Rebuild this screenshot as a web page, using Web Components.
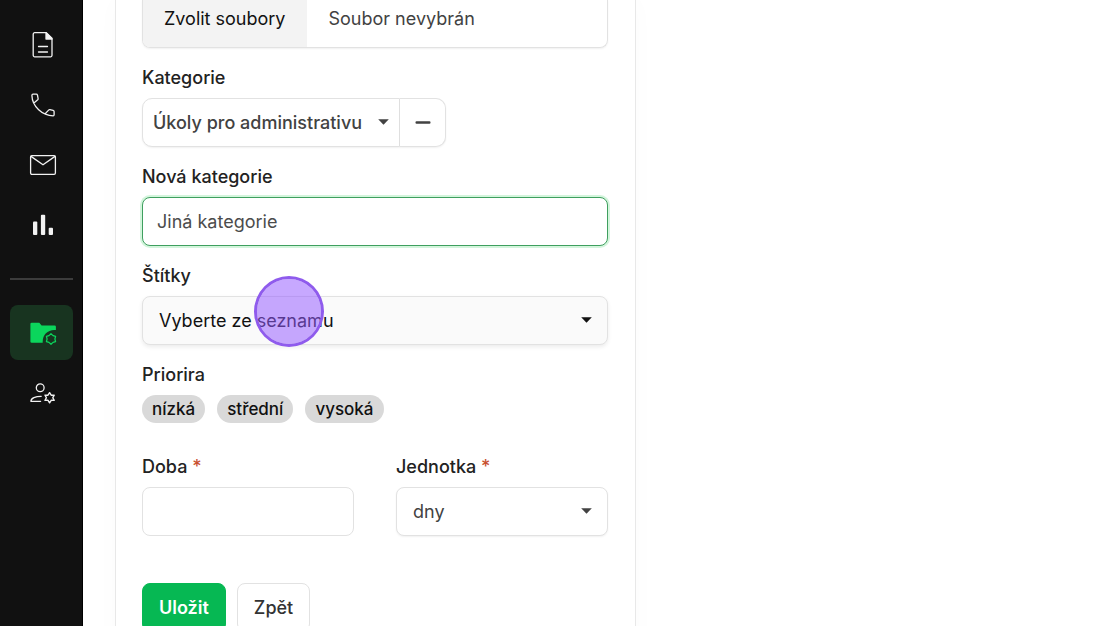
<!DOCTYPE html>
<html lang="cs">
<head>
<meta charset="utf-8">
<meta name="viewport" content="width=device-width, initial-scale=1">
<title>Nový úkol</title>
<style>
  html, body { margin: 0; height: 100%; }
  body {
    font: 400 18px/24px Inter, "Liberation Sans", sans-serif;
    color: #222;
    background: #fff;
  }
</style>
</head>
<body>
<app-shell>
  <side-nav slot="nav">
    <nav-item label="Dokumenty"><svg viewBox="0 0 28 28"><path d="M5.7 1.7h11.6l5.700 5.600v17a1.500 1.500 0 0 1-1.500 1.500H5.700a1.500 1.500 0 0 1-1.500-1.500V3.200a1.500 1.500 0 0 1 1.500-1.500z"/><path d="M17 1.700V8h6z" fill="currentColor"/><path d="M9.500 15.500h9M9.500 21h9"/></svg></nav-item>
    <nav-item label="Telefon"><svg viewBox="0 0 28 28"><path d="M4 3.200h3.300c.6 0 1 .4 1.200 1l.6 3.300c.1.500 0 .9-.4 1.300L5.500 11.400M4 3.200c-.8 0-1.100.4-1.100 1.200C3.200 15.500 13.500 24.500 24.200 24.800c.6 0 .9-.3.900-1v-3.200c0-.6-.4-1-1-1.200l-3.200-.7c-.5-.1-.9 0-1.300.4l-3.100 3.300"/></svg></nav-item>
    <nav-item label="Pošta"><svg viewBox="0 0 28 28"><rect x="1.600" y="4.600" width="24.800" height="18.800" rx="1.300"/><path d="M2 5.400l12 8.400 12-8.400"/></svg></nav-item>
    <nav-item label="Statistiky"><svg viewBox="0 0 28 28"><g fill="currentColor" stroke="none"><rect x="4" y="10.500" width="4.300" height="13.500" rx="1"/><rect x="11.900" y="3.800" width="4.300" height="20.200" rx="1"/><rect x="19.700" y="16.700" width="4.300" height="7.300" rx="1"/></g></svg></nav-item>
    <hr>
    <nav-item label="Správa úkolů" current><svg viewBox="0 0 28 28"><path d="M1.400 5.100a1.300 1.300 0 0 1 1.300-1.300h7.600l2.300 2.700h13a1.300 1.300 0 0 1 1.300 1.300v3.200c-7.500-.9-13.200 4.300-13.200 11.800v.9H2.700a1.300 1.300 0 0 1-1.300-1.300z" fill="currentColor" stroke="none"/><path d="M22 14.700l2 1.900 2.600.75-.7 2.650.7 2.650-2.600.75-2 1.900-2-1.900-2.600-.75.7-2.650-.7-2.650 2.600-.75z" stroke-width="1.200"/></svg></nav-item>
    <nav-item label="Nastavení uživatele"><svg viewBox="0 0 28 28"><circle cx="11.200" cy="8.700" r="3.900"/><path d="M12.200 17.300C6.500 17.300 1.900 19.200 1.900 22.300h9.700"/><path d="M20.600 13.700l1.600 2.500 3-.1-1.400 2.650 1.400 2.650-3-.1-1.600 2.500-1.600-2.500-3 .1 1.400-2.650-1.400-2.650 3 .1z" stroke-width="1.400"/></svg></nav-item>
  </side-nav>
  <form-card>
    <file-field button="Zvolit soubory" status="Soubor nevybrán"></file-field>
    <select-field label="Kategorie" value="Úkoly pro administrativu" compact><remove-icon slot="action"></remove-icon></select-field>
    <text-field label="Nová kategorie" placeholder="Jiná kategorie" active></text-field>
    <select-field label="Štítky" value="Vyberte ze seznamu" filled><click-marker slot="overlay"></click-marker></select-field>
    <pill-group label="Priorira" options="nízká,střední,vysoká"></pill-group>
    <field-row>
      <text-field label="Doba" required></text-field>
      <select-field label="Jednotka" value="dny" required></select-field>
    </field-row>
    <form-actions>
      <action-button primary>Uložit</action-button>
      <action-button>Zpět</action-button>
    </form-actions>
  </form-card>
</app-shell>

<script>
const base = `
  *, *::before, *::after { box-sizing: border-box; }
  :host { display: block; box-sizing: border-box; }
  :host([hidden]) { display: none; }
  button, input, select { font: inherit; color: inherit; margin: 0; }
`;

const fieldStyles = `
  :host { min-width: 0; }
  .label { display: block; font-weight: 500; margin-bottom: 8px; color: #222; }
  .star { color: #c8502f; }
  .control {
    display: block; width: 100%; height: 49px;
    border: 1px solid #e2e2e2; border-radius: 8px;
    background: #fff; color: #424242; outline: none;
  }
`;

function define(name, styles, render) {
  customElements.define(name, class extends HTMLElement {
    constructor() {
      super();
      this.attachShadow({ mode: "open" });
    }
    connectedCallback() {
      this.shadowRoot.innerHTML = `<style>${base}${styles}</style>${render(this)}`;
    }
  });
}

const attr = (el, name) => el.getAttribute(name) || "";
const labelFor = el => `<label class="label" for="control">${attr(el, "label")}${
  el.hasAttribute("required") ? ' <span class="star">*</span>' : ""}</label>`;

define("app-shell", `
  :host { display: flex; height: 100vh; overflow: hidden; }
  main { flex: 1; min-width: 0; padding: 0 32px; overflow-y: auto; scrollbar-width: none; }
`, () => `<slot name="nav"></slot><main><slot></slot></main>`);

define("side-nav", `
  :host { flex: none; width: 83px; background: #111; border-right: 1px solid #000; color: #fff; }
  nav { display: flex; flex-direction: column; gap: 5px; padding: 17px 9px 0 10px; }
  ::slotted(hr) { width: 100%; height: 2px; margin: 21px 0 20px; border: 0; background: #3c3c3c; }
`, () => `<nav aria-label="Hlavní navigace"><slot></slot></nav>`);

define("nav-item", `
  a { display: grid; place-items: center; height: 55px; padding-left: 2px; border-radius: 8px; color: #f2f2f2; }
  :host([current]) a { background: #183420; color: #0bd65c; }
  ::slotted(svg) { width: 28px; height: 28px; fill: none; stroke: currentColor; stroke-width: 1.3; stroke-linejoin: round; stroke-linecap: round; }
`, el => `<a href="#" aria-label="${attr(el, "label")}"><slot></slot></a>`);

define("form-card", `
  :host { max-width: 521px; border: solid #e8e8e8; border-width: 0 1px; padding: 0 27px 26px 26px; background: #fff; box-shadow: 0 0 24px rgba(0, 0, 0, .02); }
  form { display: flex; flex-direction: column; gap: 18px; }
`, () => `<form><slot></slot></form>`);

define("file-field", `
  label { display: flex; height: 48px; line-height: 38px; border: 1px solid #e2e2e2; border-top: 0; border-radius: 0 0 8px 8px; overflow: hidden; box-shadow: 0 1px 2px rgba(0, 0, 0, .06); }
  input { position: absolute; width: 1px; height: 1px; opacity: 0; }
  .pick { padding: 0 22px 0 21px; background: #f3f3f3; color: #111; }
  .status { padding: 0 21px; color: #424242; }
`, el => `<label><input type="file" multiple><span class="pick">${attr(el, "button")}</span><span class="status">${attr(el, "status")}</span></label>`);

define("text-field", fieldStyles + `
  .control { padding: 0 14px; }
  .control::placeholder { color: #4c4c4c; opacity: 1; }
  :host([active]) .control { border-color: #3f9f5f; box-shadow: 0 0 0 2px #d3f5dc; }
`, el => `${labelFor(el)}<input id="control" class="control" type="text" placeholder="${attr(el, "placeholder")}">`);

define("select-field", fieldStyles + `
  .row { position: relative; display: flex; }
  .box { flex: 1; min-width: 0; display: grid; align-items: center; }
  select, .caret { grid-area: 1 / 1; }
  .control { appearance: none; padding: 0 40px 0 16px; box-shadow: 0 1px 2px rgba(0, 0, 0, .06); }
  .caret { justify-self: end; margin: 0 16px 2px 0; width: 11px; height: 6px; pointer-events: none; fill: #424242; }
  :host([filled]) .control { background: #fafafa; color: #111; box-shadow: 0 2px 4px rgba(0, 0, 0, .08); }
  :host([filled]) .caret { fill: #111; }
  :host([compact]) .box { flex: none; }
  :host([compact]) .control { padding: 0 36px 0 10px; font-weight: 500; border-radius: 10px 0 0 10px; }
  :host([compact]) .caret { margin-right: 11px; }
`, el => `${labelFor(el)}<div class="row"><div class="box">
    <select id="control" class="control"><option>${attr(el, "value")}</option></select>
    <svg class="caret" viewBox="0 0 11 6" aria-hidden="true"><path d="M.2 .3h10.600l-5.300 5.500z"/></svg>
  </div><slot name="action"></slot><slot name="overlay"></slot></div>`);

define("remove-icon", `
  button { display: grid; place-items: center; width: 46px; height: 49px; padding: 0; border: 1px solid #e2e2e2; border-left: 0; border-radius: 0 10px 10px 0; background: #fff; color: #424242; box-shadow: 0 1px 2px rgba(0, 0, 0, .06); }
  svg { width: 16px; height: 3px; fill: currentColor; }
`, () => `<button type="button" aria-label="Odebrat"><svg viewBox="0 0 16 3"><rect x=".5" y=".3" width="15" height="2.400" rx="1"/></svg></button>`);

define("click-marker", `
  :host { position: absolute; left: 112px; top: -20px; width: 70px; height: 71px; border: 3px solid #8f5bed; border-radius: 50%; background: rgba(150, 90, 255, .53); background-clip: padding-box; pointer-events: none; }
`, () => ``);

define("pill-group", fieldStyles + `
  .pills { display: flex; flex-wrap: wrap; gap: 12px; }
  button { height: 28px; padding: 0 10px; border: 0; border-radius: 14px; background: #d9d9d9; color: #111; font-size: 17px; font-weight: 500; }
`, el => `<div role="group" aria-labelledby="title"><span class="label" id="title">${attr(el, "label")}</span><div class="pills">${
  attr(el, "options").split(",").map(o => `<button type="button">${o}</button>`).join("")}</div></div>`);

define("field-row", `
  :host { display: grid; grid-template-columns: 1fr 1fr; gap: 42px; margin-top: 14px; }
`, () => `<slot></slot>`);

define("form-actions", `
  :host { display: flex; gap: 11px; margin-top: 29px; }
`, () => `<slot></slot>`);

define("action-button", `
  button { height: 49px; padding: 0 16px; border: 1px solid #e2e2e2; border-radius: 8px; background: #fff; color: #333; font-weight: 500; }
  :host([primary]) button { border-color: #06b853; background: #06b853; color: #fff; font-weight: 600; }
`, () => `<button type="button"><slot></slot></button>`);
</script>
</body>
</html>
